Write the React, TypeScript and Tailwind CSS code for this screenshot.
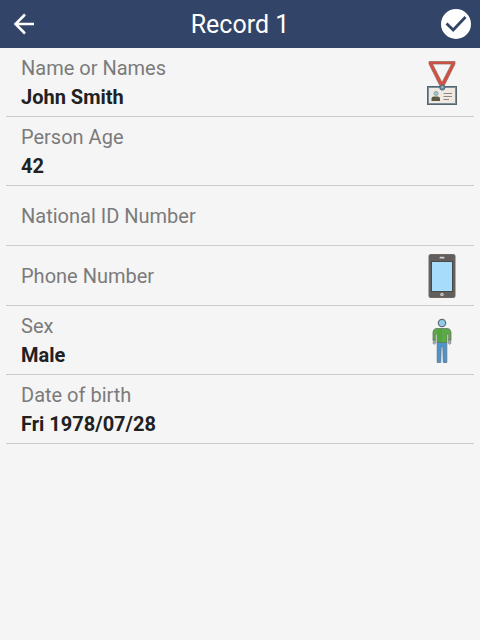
import type { ReactNode } from "react";

type Field = { label: string; value?: string; icon?: ReactNode };

function BadgeIcon() {
  return (
    <svg viewBox="0 0 32 46" className="h-[46px] w-8" aria-hidden="true">
      <path d="M3 1.500H29V4L17.500 27H14.500L3 4ZM6.500 4L16 22.500L25.500 4Z" fill="#d94f3f" fillRule="evenodd" stroke="#85685f" strokeWidth="0.700" />
      <rect x="1" y="26" width="30" height="19" fill="#55656e" />
      <rect x="2" y="27" width="28" height="17" fill="#7b909d" />
      <rect x="3" y="28" width="26" height="15" fill="#efe9e1" />
      <path d="M5.500 41V38.500Q5.500 36.500 8 36.500H11.500Q14 36.500 14 38.500V41Z" fill="#5c5943" />
      <circle cx="10" cy="33.500" r="2.100" fill="#8fcbe6" stroke="#8d8985" strokeWidth="0.700" />
      <path d="M17.500 33.500H26M17.500 36.500H26M17.500 39.500H23" stroke="#8d8985" strokeWidth="1.100" />
      <circle cx="16.300" cy="27.500" r="2.600" fill="#6a8da5" stroke="#4d697b" strokeWidth="1" />
      <circle cx="16.300" cy="27" r="1" fill="#a9c2d0" />
    </svg>
  );
}

function PhoneIcon() {
  return (
    <svg viewBox="0 0 32 46" className="h-[46px] w-8" aria-hidden="true">
      <rect x="3" y="0.500" width="26" height="43" rx="1.500" fill="#625e5b" stroke="#6b6865" strokeWidth="1" />
      <rect x="5" y="7" width="22" height="31" fill="#4b4947" />
      <rect x="6" y="8" width="20" height="29" fill="#a8dcfb" />
      <rect x="13.500" y="2.800" width="5" height="1.800" rx="0.900" fill="#d5d2cf" />
      <circle cx="16" cy="40.500" r="1.700" fill="#d9d7d5" />
      <path d="M16 39.500V41.500M15 40.500H17" stroke="#9c9895" strokeWidth="0.700" />
    </svg>
  );
}

function PersonIcon() {
  return (
    <svg viewBox="0 0 32 46" className="h-[46px] w-8" aria-hidden="true">
      <path d="M11.200 24H20.800V44.500H17.300L16.800 28.500H15.200L14.700 44.500H11.200Z" fill="#4b94cf" stroke="#5f7484" strokeWidth="0.800" strokeLinejoin="round" />
      <path d="M7.300 21V25.500Q8.300 27 9.300 25.500V21M22.700 21V25.500Q23.700 27 24.700 25.500V21" fill="#a9bdc0" stroke="#808680" strokeWidth="0.900" />
      <path d="M11 10.500H21Q25 10.500 25 15V22H22.700V16H21V24.500H11V16H9.300V22H7V15Q7 10.500 11 10.500Z" fill="#5aaa45" stroke="#66765f" strokeWidth="0.800" strokeLinejoin="round" />
      <rect x="11.500" y="11" width="4.500" height="13" fill="#52a43e" />
      <circle cx="16" cy="5" r="3.700" fill="#8dcceb" stroke="#626d72" strokeWidth="1.200" />
    </svg>
  );
}

const fields: Field[] = [
  { label: "Name or Names", value: "John Smith", icon: <BadgeIcon /> },
  { label: "Person Age", value: "42" },
  { label: "National ID Number" },
  { label: "Phone Number", icon: <PhoneIcon /> },
  { label: "Sex", value: "Male", icon: <PersonIcon /> },
  { label: "Date of birth", value: "Fri 1978/07/28" },
];

export default function App() {
  return (
    <div className="min-h-screen bg-[#f5f5f5] font-['Roboto','Liberation_Sans',sans-serif]">
      <header className="flex h-12 items-center bg-[#324468] text-white">
        <button type="button" aria-label="Back" className="flex size-12 items-center justify-center">
          <svg viewBox="0 0 24 24" className="size-6" fill="none" stroke="currentColor" strokeWidth="2.500" aria-hidden="true">
            <path d="M22 12H4M13 2.500L3.500 12L13 21.500" />
          </svg>
        </button>
        <h1 className="flex-1 pt-0.5 text-center text-[25px] leading-8">Record 1</h1>
        <button type="button" aria-label="Save record" className="flex size-12 items-center justify-center">
          <svg viewBox="0 0 30 30" className="size-[30px]" aria-hidden="true">
            <circle cx="15" cy="15" r="15" fill="white" />
            <path d="M5.500 14.500L12.200 21L24.500 8" fill="none" stroke="#324468" strokeWidth="2.800" />
          </svg>
        </button>
      </header>
      <main className="px-1.5">
        <ul>
          {fields.map(({ label, value, icon }) => (
            <li key={label} className="border-b border-[#cccccc]">
              <button type="button" className="flex min-h-[59px] w-full items-center justify-between pt-1.5 pb-1 pl-[15px] pr-4 text-left">
                <span className="flex flex-col text-xl leading-[29px]">
                  <span className="text-[#7b7b7b]">{label}</span>
                  {value && <span className="font-bold text-[#212121]">{value}</span>}
                </span>
                {icon}
              </button>
            </li>
          ))}
        </ul>
      </main>
    </div>
  );
}
